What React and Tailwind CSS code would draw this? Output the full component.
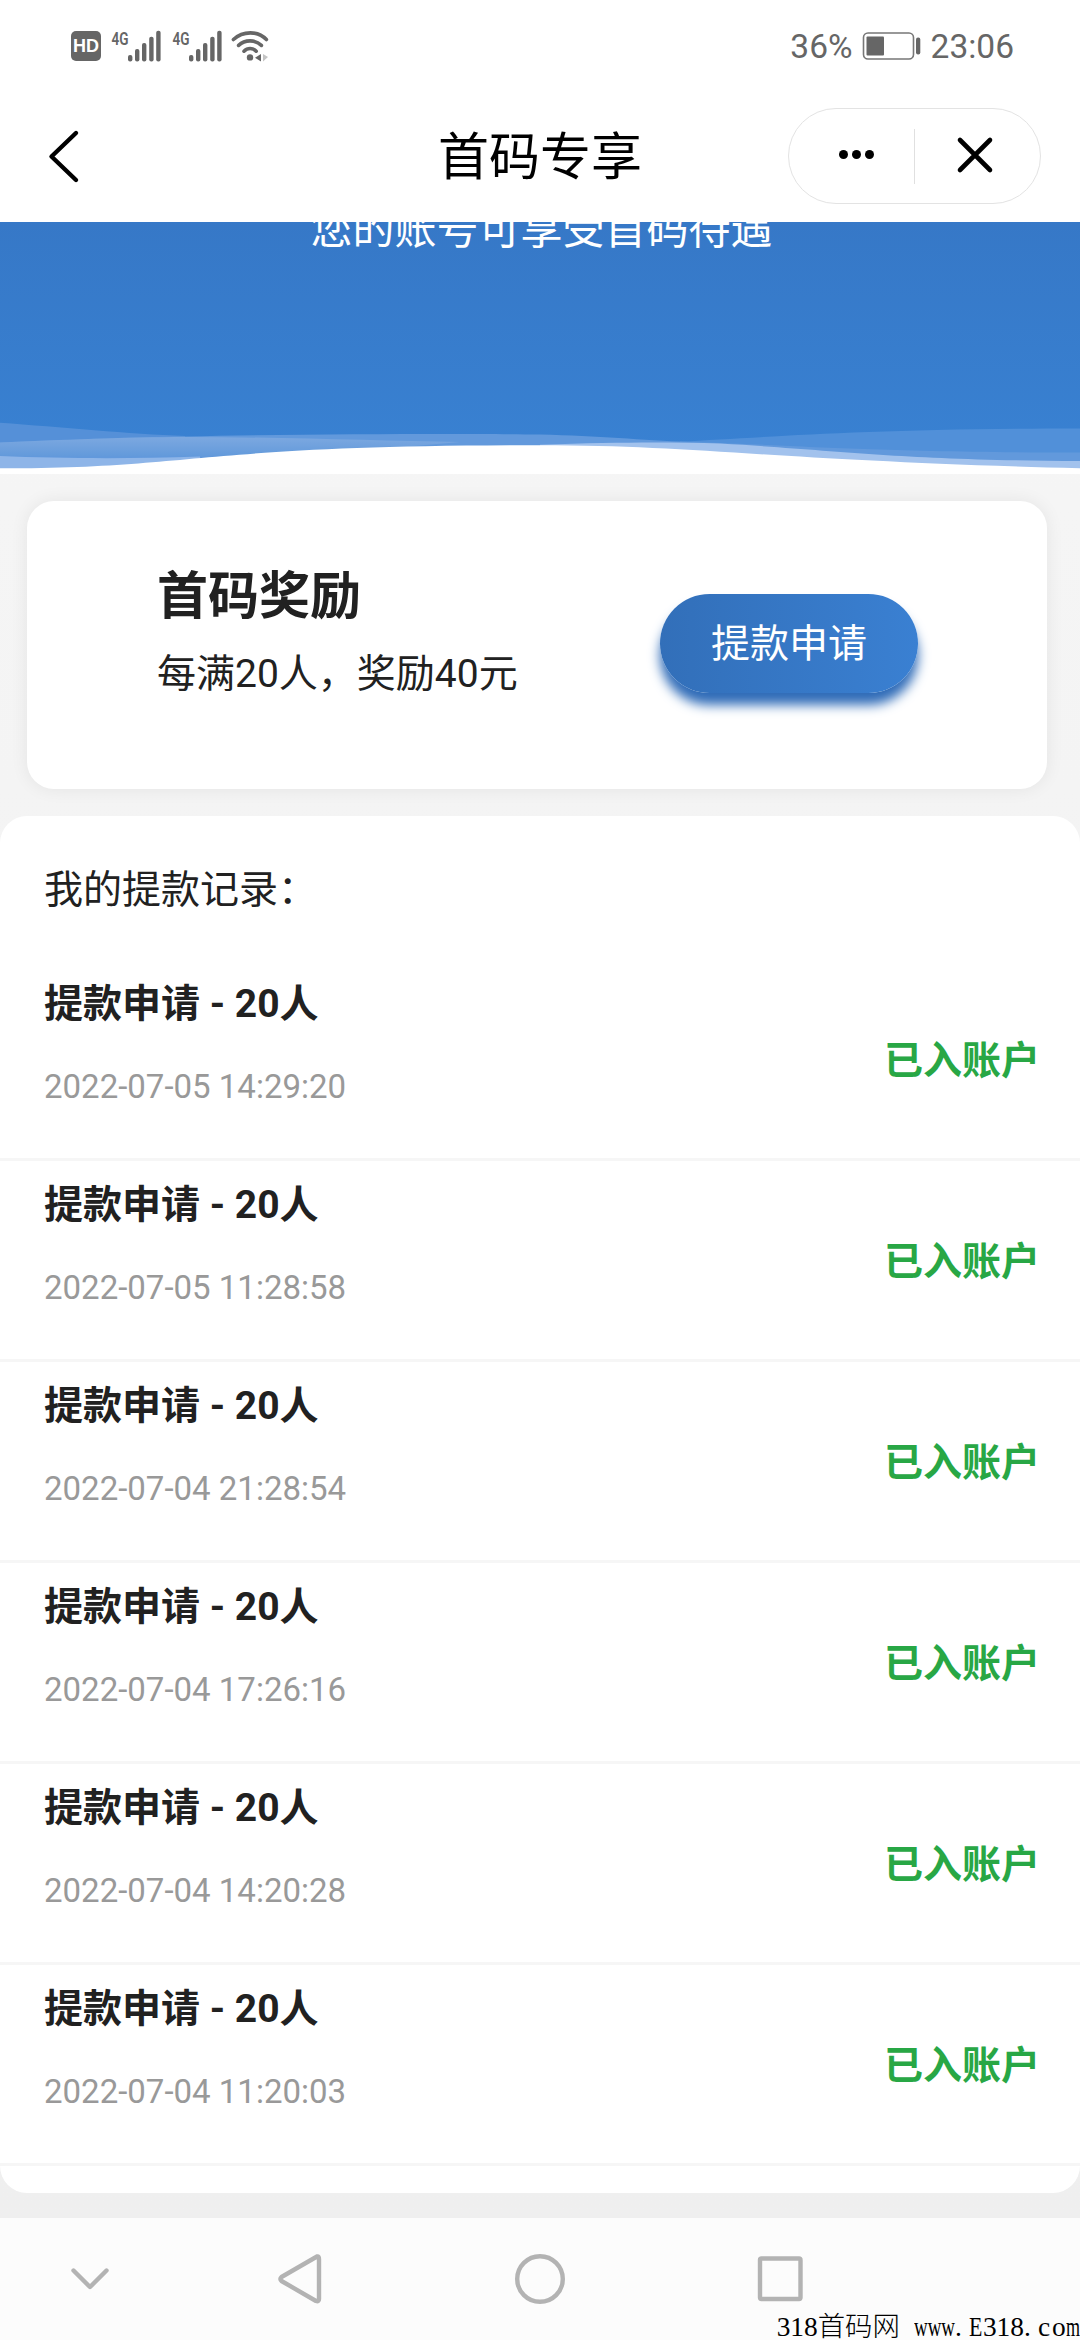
const records = [
  { id: 1, count: 20, time: "2022-07-05 14:29:20" },
  { id: 2, count: 20, time: "2022-07-05 11:28:58" },
  { id: 3, count: 20, time: "2022-07-04 21:28:54" },
  { id: 4, count: 20, time: "2022-07-04 17:26:16" },
  { id: 5, count: 20, time: "2022-07-04 14:20:28" },
  { id: 6, count: 20, time: "2022-07-04 11:20:03" },
];

function Signal() {
  return (
    <svg className="overflow-visible" width="51" height="34" viewBox="0 0 51 34" fill="#666666">
      <text x="0.5" y="15.5" fontSize="18.5" fontWeight="600" fontFamily="Roboto, sans-serif" textLength="17" lengthAdjust="spacingAndGlyphs">
        4G
      </text>
      <rect x="17" y="26" width="4.4" height="6.4" rx="2" />
      <rect x="24" y="20" width="4.4" height="12.4" rx="2" />
      <rect x="31" y="14" width="4.4" height="18.4" rx="2" />
      <rect x="38.2" y="7.7" width="4.4" height="24.7" rx="2" />
      <rect x="45.2" y="1.8" width="4.4" height="30.6" rx="2" />
    </svg>
  );
}

function StatusBar() {
  return (
    <div className="flex h-[90px] items-center justify-between pl-[71px] pr-[66px] text-[#666666]">
      <div className="flex items-center pt-px">
        <div className="flex size-[30px] items-center justify-center rounded-[5px] bg-[#666666] pt-px font-['Liberation_Sans',sans-serif] text-[18px] font-bold text-white">
          HD
        </div>
        <div className="ml-[10px] flex gap-[10px]">
          <Signal />
          <Signal />
        </div>
        <svg className="ml-2" width="38" height="34" viewBox="0 0 38 34" fill="none" stroke="#666666" strokeWidth="3.6" strokeLinecap="round">
          <path d="M2.4 10.5C12 1.6 27 1.6 35.4 10.5" />
          <path d="M7.6 16.4C14 10.4 24 10.4 30.4 16.4" />
          <path d="M13 22.2C16.5 18.6 21.8 18.6 25.2 22.2" />
          <circle cx="19" cy="28.4" r="3.2" fill="#666666" stroke="none" />
          <path d="M30 25v7.5l-6-3.7z" fill="#666666" stroke="none" />
          <path d="M32 25v7.5l5-4.5z" fill="#c4c4c4" stroke="none" />
        </svg>
      </div>
      <div className="flex items-center pt-px text-[33.5px] leading-none">
        <span className="pt-0.5">36%</span>
        <svg className="ml-[9px] mr-[10px]" width="59" height="28" viewBox="0 0 59 28">
          <rect x="1.5" y="1" width="50" height="26" rx="4.5" fill="none" stroke="#777777" strokeWidth="1.6" />
          <rect x="4.5" y="4.5" width="17.5" height="19" rx="1" fill="#666666" />
          <rect x="54" y="5.5" width="4.3" height="17" rx="2" fill="#666666" />
        </svg>
        <span className="pt-0.5">23:06</span>
      </div>
    </div>
  );
}

function Header() {
  return (
    <div className="grid h-[132px] grid-cols-[1fr_auto_1fr] items-center px-[39px]">
      <svg className="ml-[7px]" width="36" height="56" viewBox="0 0 36 56" fill="none" stroke="#000000" strokeWidth="4.4" strokeLinecap="round" strokeLinejoin="round">
        <path d="M30 5L5.5 28.5L30 52" />
      </svg>
      <h1 className="pt-0.5 text-[51px] leading-none text-black">首码专享</h1>
      <div className="flex h-24 w-[253px] items-center justify-self-end rounded-full border border-[#e3e3e3]">
        <div className="flex flex-1 gap-1 pb-[3px] pl-[50px]">
          <span className="size-[9px] rounded-full bg-black" />
          <span className="size-[9px] rounded-full bg-black" />
          <span className="size-[9px] rounded-full bg-black" />
        </div>
        <div className="h-[55px] w-px bg-[#e0e0e0]" />
        <div className="flex w-[125px] justify-center pb-[3px] pr-[6px]">
          <svg width="38" height="38" viewBox="0 0 38 38" stroke="#000000" strokeWidth="4.6" strokeLinecap="round">
            <path d="M4 4L34 34M34 4L4 34" />
          </svg>
        </div>
      </div>
    </div>
  );
}

function Banner() {
  return (
    <div className="flex h-[252px] flex-col justify-between overflow-hidden bg-linear-to-b from-[#3678c7] to-[#3982d3]">
      <p className="-mt-[13px] pl-[3px] text-center text-[42px] leading-[42px] text-white">您的账号可享受首码待遇</p>
      <svg className="block w-full shrink-0" height="54" viewBox="0 0 1080 54">
        <defs>
          <linearGradient id="band" x1="0" y1="0" x2="0" y2="1">
            <stop offset="0" stopColor="#7ca8e0" />
            <stop offset="1" stopColor="#639adb" />
          </linearGradient>
        </defs>
        <path d="M0 2.7C60 7 130 14 185 16V30H0Z" fill="#5590d8" />
        <path d="M680 21.5C760 18 860 8.5 1080 8.5V40H680Z" fill="#5190d9" />
        <path d="M0 22.5C60 20 130 17 185 16.5C300 14 470 13.5 540 14.5C600 16 640 20 690 22C780 24 850 32 1080 32.5V50H0Z" fill="#6299dc" />
        <path d="M0 22.5C60 20 130 17 185 17C280 17 380 21 460 22L300 36H0Z" fill="url(#band)" />
        <path d="M0 36C60 38.5 130 39 200 36.5V50H0Z" fill="#8eb5e8" />
        <path d="M540 24.7C620 22 670 22 720 23.5C850 31 900 40 1080 41V52H540Z" fill="#a2c2ed" />
        {/* white foot under all of the waves */}
        <path d="M0 48.3C200 48.3 190 25.3 540 25.3C700 25.3 780 41 1080 48.3V54H0Z" fill="#ffffff" />
      </svg>
    </div>
  );
}

function RewardCard() {
  return (
    <div className="ml-[27px] mr-[33px] mt-[27px] flex h-72 justify-between rounded-[27px] bg-white pl-[130px] pr-[129px] shadow-[0_0_18px_rgba(0,0,0,0.07)]">
      <div className="pt-[70px]">
        <h2 className="text-[51px] font-bold leading-[51px]">首码奖励</h2>
        <p className="mt-[33px] text-[39px] leading-[39px]">每满20人，奖励40元</p>
      </div>
      <button className="mt-[93px] h-[99px] w-[258px] rounded-full bg-linear-to-r from-[#326fb9] to-[#3a80d2] pt-0.5 text-[39px] leading-none text-white shadow-[0_12px_12px_#306cb8]">
        提款申请
      </button>
    </div>
  );
}

function RecordRow({ record }) {
  return (
    <li className="flex h-[201px] justify-between border-b-[3px] border-[#f6f6f6] pl-11 pr-10">
      <div className="pt-[25px]">
        <div className="text-[39px] font-bold leading-[39px]">提款申请 - {record.count}人</div>
        <div className="mt-[43px] text-[33px] leading-[39px] text-[#999999]">{record.time}</div>
      </div>
      <span className="pt-[82px] text-[39px] font-bold leading-[39px] text-[#28a745]">已入账户</span>
    </li>
  );
}

function NavBar() {
  return (
    <div className="flex h-[122px] items-center bg-[#fcfcfc]">
      <svg width="1080" height="122" viewBox="0 0 1080 122" fill="none" stroke="#b3b3b3" strokeWidth="4.4" strokeLinecap="round" strokeLinejoin="round">
        <path d="M73.5 52.5L90 69L106.5 52.5" />
        <path d="M317 38.5Q319 38 319 41V81Q319 84 316 83L281.5 63Q279.5 61 281.5 59Z" />
        <circle cx="540" cy="61" r="22.8" />
        <rect x="760" y="40.5" width="40.5" height="40.5" rx="1.5" />
      </svg>
    </div>
  );
}

function Watermark() {
  return (
    <div className="absolute bottom-0 right-0 flex h-[25px] items-center whitespace-nowrap font-['Liberation_Serif','Noto_Sans_CJK_SC',serif] text-[27.4px] font-light leading-[25px] text-black">
      <span>318首码网</span>
      <span className="ml-[14px] inline-block w-[41px] origin-left scale-x-[0.69]">www</span>
      <span className="w-[14px]">.</span>
      <span className="inline-block w-[14px] origin-left scale-x-[0.8]">E</span>
      <span>318</span>
      <span className="w-[14px]">.</span>
      <span className="w-[14px]">c</span>
      <span className="w-[14px]">o</span>
      <span className="inline-block w-[14px] origin-left scale-x-[0.66]">m</span>
    </div>
  );
}

export default function App() {
  return (
    <div className="relative flex h-[2340px] w-[1080px] flex-col overflow-hidden bg-white font-[Roboto,'Noto_Sans_CJK_SC',sans-serif] text-[#212121]">
      <StatusBar />
      <Header />
      <main className="h-[1996px] bg-linear-to-b from-[#f6f6f6] to-[#efefef]">
        <Banner />
        <RewardCard />
        <section className="mt-[27px] h-[1377px] rounded-[27px] bg-white">
          <h3 className="h-36 pl-11 pt-[55px] text-[39px] leading-[39px]">我的提款记录：</h3>
          <ul>
            {records.map((record) => (
              <RecordRow key={record.id} record={record} />
            ))}
          </ul>
        </section>
      </main>
      <NavBar />
      <Watermark />
    </div>
  );
}
